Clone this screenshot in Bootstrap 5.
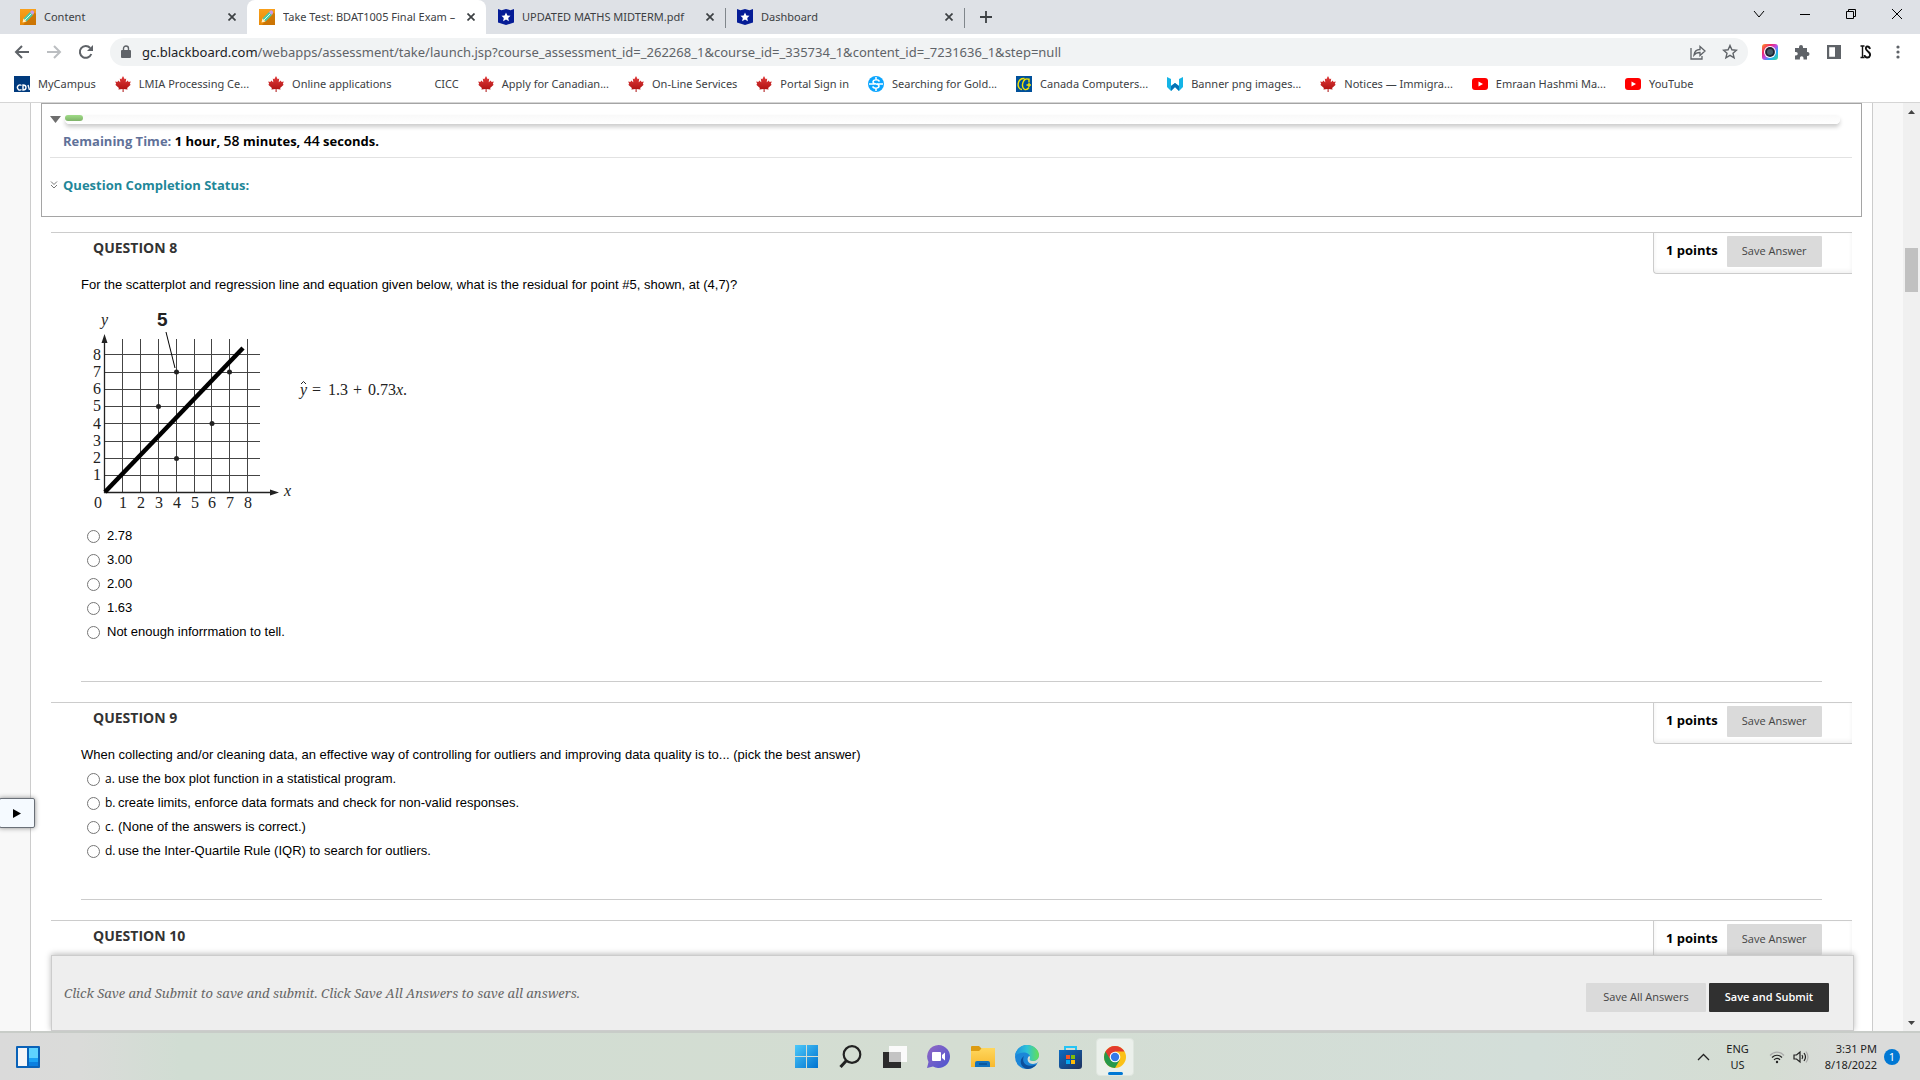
<!DOCTYPE html>
<html lang="en">
<head>
<meta charset="utf-8">
<title>Take Test: BDAT1005 Final Exam</title>
<meta name="viewport" content="width=device-width, initial-scale=1">
<link href="https://cdn.jsdelivr.net/npm/bootstrap@5.3.0/dist/css/bootstrap.min.css" rel="stylesheet">
<style>
body{font-family:"Open Sans","Noto Sans",sans-serif;font-size:12px;line-height:16px;color:#000;height:100vh;overflow:hidden}
button{font-family:inherit}
svg{display:block;flex:none}
a{color:inherit;text-decoration:none}
.plain{border:0;background:none;padding:0;color:inherit}
/* browser chrome */
.tabstrip,.url,.marks,.tray{font-family:"Noto Sans","Open Sans",sans-serif}
.tabstrip{height:34px;background:#dee1e6;color:#3c4043}
.btab{width:239px;padding:0 11px 0 20px}
.btab.lead-tab{width:247px}
.btab .label{flex:1;overflow:hidden;white-space:nowrap;margin:0 5px 0 8px;font-size:11px}
.btab.on{background:#fff;border-radius:8px 8px 0 0;padding-left:12px}
.btab.follow{padding-left:12px}
.sep{width:1px;height:20px;margin-right:-1px;background:#80868b}
.wincontrols{gap:28px;padding:0 14px 6px 0}
.toolbar{height:36px;padding:0 14px;color:#5f6368}
.omni{height:28px;border-radius:14px;background:#f1f3f4;padding:0 10px 0 11px;margin-right:14px}
.url{font-size:13px;white-space:nowrap;margin-left:11px}
.url b{font-weight:400;color:#202124}
.marks{height:32px;padding:0 14px 4px;color:#3c4043}
.marks a{display:flex;align-items:center;gap:8px;white-space:nowrap;margin-right:19px;font-size:11px}
/* page */
.viewport{flex:1 1 0;min-height:0;border-top:1px solid #d5d5d5;background:#f8f8f8;overflow:hidden}
.sheet{margin:0 31px 0 30px;border:solid #ccc;border-width:0 1px;background:#fff;padding:0 10px}
.timer{border:1px solid #a5a5a5;height:114px;padding:9px 9px 0 8px}
.track{height:9px;border-radius:5px;margin:2px 12px 0 4px;box-shadow:0 3px 4px #ccc;background:linear-gradient(#f9f9f9,#fff)}
.track i{display:block;width:18px;height:6px;border-radius:3px;background:linear-gradient(#a0dc87,#7fb269)}
.tri{margin-top:3px}
.remain{font-weight:700;font-size:13px;line-height:18px;padding:7px 0 7px 13px;border-bottom:1px solid #e2e2e2;margin-top:1px;color:#000}
.remain span{color:#5f7199}
.remain b{font-size:14px;font-weight:600}
.qstatus{color:#1f8799;font-size:13px;font-weight:700;line-height:18px;margin-top:18px;gap:5px}
.question{margin:0 10px;border-top:1px solid #ccc;height:218px}
.question.first{margin-top:15px;height:470px}
.question h2{font-size:14px;font-weight:700;line-height:18px;color:#333;margin:6px 0 0 42px}
.points{width:199px;height:41px;border:solid #ccc;border-width:0 0 1px 1px;border-radius:0 0 0 4px;padding:3px 0 0 12px;gap:9px;box-shadow:inset 0 -2px 4px #f0f0f0}
.points strong{font-size:13px;font-weight:700;line-height:28px}
.btn-bb{border:0;border-radius:1px;background:#dadada;color:#444;font-size:11px;line-height:16px;padding:0 0 2px;height:31px;width:95px}
.qbody{font-family:"Liberation Sans",Arial,sans-serif;font-size:13px;line-height:24px;margin:-1px 30px 0;border-bottom:1px solid #ccc}
.qbody.tall{height:409px}
.qbody.short{height:157px}
.qbody p{margin:0}
.qbody input{width:13px;height:13px;margin:0 7px 0 6px;flex:none}
.lettered input{margin-right:5px}
.ltr{width:13px;font-family:"Open Sans",sans-serif;font-size:12px;white-space:nowrap}
.chart text{font-family:"Liberation Serif",serif;font-size:16px;fill:#222}
.submitbar{left:51px;right:66px;bottom:0;height:76px;background:#eee;border:1px solid #ccc;box-shadow:0 -1px 6px #bbb;padding:0 24px 0 12px}
.submitbar em{font-family:"Noto Serif","Liberation Serif",Georgia,serif;font-size:13px;color:#666}
.submitbar .actions{gap:3px}
.submitbar .btn{height:29px;width:120px;padding:0;border:0;border-radius:1px;font-size:11px;line-height:16px}
.btn-submit{--bs-btn-bg:#303030}
.handle{left:-1px;top:695px;width:36px;height:30px;border:1px solid #6a7078;border-radius:2px;background:#f5faff;box-shadow:0 0 5px #888}
.scroller{right:0;top:0;bottom:0;width:17px;background:#f0f0f0;padding:7px 0 6px}
.scroller i{width:13px;height:44px;background:#c1c1c1;margin-top:134px}
/* taskbar */
.taskbar{height:49px;border-top:2px solid #c8ccc8;background:linear-gradient(90deg,#dadada 0,#dadbd9 80px,#d1ddd3 180px,#d4ddd2 50%,#d3ded9 80%,#d5ddd3 92%,#dadbda 97%);color:#222}
.apps{left:787px;top:0;height:47px}
.apps button{width:44px;height:40px}
.apps .open{background:#ebf0eb;border:1px solid #dfe6df;border-radius:4px;width:38px;height:38px;margin-left:1px;position:relative}
.apps .open::after{content:"";position:absolute;bottom:0;left:11px;width:15px;height:3px;border-radius:2px;background:#0078d4}
.tray{font-size:11px;line-height:16px;padding-right:20px}
.badge-n{width:16px;height:16px;border-radius:8px;background:#0078d4;color:#fff;font-size:11px;line-height:16px;text-align:center;margin-left:7px}
</style>
<script src="https://cdn.jsdelivr.net/npm/bootstrap@5.3.0/dist/js/bootstrap.bundle.min.js"></script>
</head>
<body class="d-flex flex-column">
<svg width="0" height="0" class="position-absolute" aria-hidden="true">
<defs>
<linearGradient id="gOr" x1="0" y1="0" x2="0" y2="1"><stop offset="0" stop-color="#f9a01b"/><stop offset="1" stop-color="#e88a08"/></linearGradient>
<linearGradient id="gRed" x1="0" y1="0" x2="0" y2="1"><stop offset="0" stop-color="#e23b3b"/><stop offset="1" stop-color="#a80d0d"/></linearGradient>
<linearGradient id="gWin" gradientUnits="userSpaceOnUse" x1="0" y1="0" x2="23" y2="23"><stop offset="0" stop-color="#4cc9fa"/><stop offset="1" stop-color="#0072d0"/></linearGradient>
<linearGradient id="gTeam" x1="0" y1="0" x2="1" y2="1"><stop offset="0" stop-color="#9468c4"/><stop offset="1" stop-color="#4a54d0"/></linearGradient>
<linearGradient id="gFold" x1="0" y1="0" x2="0" y2="1"><stop offset="0" stop-color="#ffd75e"/><stop offset="1" stop-color="#f8b92e"/></linearGradient>
<linearGradient id="gEdge" x1="0" y1="0" x2="1" y2="0"><stop offset="0" stop-color="#1d8fe0"/><stop offset=".5" stop-color="#2dc3d8"/><stop offset="1" stop-color="#66e052"/></linearGradient>
<linearGradient id="gStore" x1="0" y1="0" x2="1" y2="1"><stop offset="0" stop-color="#0a6cc4"/><stop offset="1" stop-color="#20305c"/></linearGradient>
<linearGradient id="gCam" x1="0" y1="0" x2="1" y2="1"><stop offset="0" stop-color="#ff9a1f"/><stop offset=".3" stop-color="#f0266f"/><stop offset=".5" stop-color="#c04ae0"/><stop offset=".7" stop-color="#25a8ff"/><stop offset="1" stop-color="#3fe08a"/></linearGradient>
<symbol id="pencil" viewBox="0 0 16 16"><rect width="16" height="16" fill="url(#gOr)"/><path d="M14.500 3.500L16 5v11H3z" fill="#b86500" opacity=".6"/><path d="M3.500 9.500l6.500-6.500 3 3-6.500 6.500z" fill="#4cc9a8"/><path d="M5 11l6.500-6.500" stroke="#d9fff0" stroke-width="1"/><path d="M10 3l1.500-1.500q1-.5 2 .5t.5 2L13 6z" fill="#c79bea"/><path d="M2.500 13.500l1-4 3 3z" fill="#fff0c8"/></symbol>
<symbol id="shield" viewBox="0 0 16 16"><path d="M0 0l3.500 1.200L8 0l4.500 1.200L16 0v13.500L8 16 0 13.500z" fill="#051c96"/><path d="M8 3.500l1.400 3 3.100.3-2.300 2.200.7 3.200L8 10.600l-2.900 1.600.7-3.200-2.300-2.200 3.100-.3z" fill="#fff"/></symbol>
<symbol id="maple" viewBox="0 0 16 16"><path d="M8 0l1.700 3.200 1.500-.8-.5 3.900 2.200-1.700.6 1.300 2.300-.3-1 2.500.9.700-3.600 3.200.5 1.500-4-.5V16h-1v-3l-4.200.5.500-1.500L.3 8.800l.9-.7-1-2.500 2.300.3.600-1.300 2.200 1.700-.5-3.900 1.500.8z" fill="url(#gRed)"/></symbol>
<symbol id="yt" viewBox="0 0 16 16"><rect y="2" width="16" height="12" rx="3" fill="#f00"/><path d="M6.500 5.500L11 8l-4.500 2.500z" fill="#fff"/></symbol>
<symbol id="cross" viewBox="0 0 8 8"><path d="M.5.5l7 7M7.500.5l-7 7" stroke="#3c4043" stroke-width="1.700"/></symbol>
</defs></svg>

<header class="flex-shrink-0">
<div class="tabstrip d-flex">
 <div class="btab lead-tab d-flex align-items-center"><svg width="16" height="16"><use href="#pencil"/></svg><span class="label">Content</span><button class="plain" aria-label="Close tab"><svg width="8" height="8"><use href="#cross"/></svg></button></div>
 <div class="btab on d-flex align-items-center"><svg width="16" height="16"><use href="#pencil"/></svg><span class="label">Take Test: BDAT1005 Final Exam –</span><button class="plain" aria-label="Close tab"><svg width="8" height="8"><use href="#cross"/></svg></button></div>
 <div class="btab follow d-flex align-items-center"><svg width="16" height="16"><use href="#shield"/></svg><span class="label">UPDATED MATHS MIDTERM.pdf</span><button class="plain" aria-label="Close tab"><svg width="8" height="8"><use href="#cross"/></svg></button></div>
 <span class="sep mt-2"></span>
 <div class="btab follow d-flex align-items-center"><svg width="16" height="16"><use href="#shield"/></svg><span class="label">Dashboard</span><button class="plain" aria-label="Close tab"><svg width="8" height="8"><use href="#cross"/></svg></button></div>
 <span class="sep mt-2"></span>
 <button class="plain ms-3" aria-label="New tab"><svg width="12" height="12" viewBox="0 0 12 12"><path d="M6 0v12M0 6h12" stroke="#3c4043" stroke-width="1.800"/></svg></button>
 <div class="wincontrols d-flex align-items-center ms-auto text-black">
  <button class="plain" aria-label="Search tabs"><svg width="18" height="12" viewBox="0 0 18 12" fill="none" stroke="currentColor"><path d="M4 3l5 6 5-6"/></svg></button>
  <button class="plain" aria-label="Minimize"><svg width="18" height="12" viewBox="0 0 18 12"><path d="M4 6.500h10" stroke="currentColor"/></svg></button>
  <button class="plain" aria-label="Restore"><svg width="18" height="12" viewBox="0 0 18 12" fill="none" stroke="currentColor"><path d="M4.500 3.500h7v7h-7zM6.500 3.500v-2h7v7h-2"/></svg></button>
  <button class="plain" aria-label="Close"><svg width="18" height="12" viewBox="0 0 18 12" fill="none" stroke="currentColor"><path d="M4 1l10 10M14 1L4 11"/></svg></button>
 </div>
</div>
<div class="toolbar d-flex align-items-center">
 <button class="plain" aria-label="Back"><svg width="16" height="16" viewBox="0 0 16 16" fill="none" stroke="#5f6368" stroke-width="2"><path d="M15 8H2M8 2L2 8l6 6"/></svg></button>
 <button class="plain ms-3" aria-label="Forward"><svg width="16" height="16" viewBox="0 0 16 16" fill="none" stroke="#bbbec1" stroke-width="2"><path d="M1 8h13M8 2l6 6-6 6"/></svg></button>
 <button class="plain ms-3" aria-label="Reload"><svg width="16" height="16" viewBox="0 0 16 16"><path d="M13.300 10A5.900 5.900 0 1 1 12.200 4" fill="none" stroke="#5f6368" stroke-width="2"/><path d="M15 1v6H9z" fill="#5f6368"/></svg></button>
 <div class="omni d-flex align-items-center flex-grow-1 ms-3">
  <svg width="10" height="14" viewBox="0 0 10 14"><rect x="0" y="5" width="10" height="8" rx="1" fill="#5f6368"/><path d="M2.500 6V3.500a2.500 2.500 0 0 1 5 0V6" fill="none" stroke="#5f6368" stroke-width="1.400"/></svg>
  <span class="url flex-grow-1"><b>gc.blackboard.com</b>/webapps/assessment/take/launch.jsp?course_assessment_id=_262268_1&amp;course_id=_335734_1&amp;content_id=_7231636_1&amp;step=null</span>
  <button class="plain" aria-label="Share"><svg width="16" height="16" viewBox="0 0 16 16" fill="none" stroke="#5f6368" stroke-width="1.300"><path d="M1 4v11h11v-3M4 11c.5-4 3-5.500 6-5.500V2.500l5 4.500-5 4.500v-3C7.500 8.500 5.500 9 4 11z"/></svg></button>
  <button class="plain ms-3" aria-label="Bookmark"><svg width="16" height="16" viewBox="0 0 16 16" fill="none" stroke="#5f6368" stroke-width="1.400"><path d="M8 1.500l1.900 4.300 4.600.4-3.500 3.100 1.100 4.600L8 11.400l-4.100 2.500L5 9.300 1.500 6.200l4.600-.4z"/></svg></button>
 </div>
 <div class="d-flex align-items-center gap-3">
  <svg width="16" height="16" viewBox="0 0 16 16"><rect width="16" height="16" rx="3" fill="url(#gCam)"/><circle cx="8" cy="8" r="6" fill="#fff"/><circle cx="8" cy="8" r="4.900" fill="#223"/><circle cx="8" cy="8" r="3" fill="#465a66"/></svg>
  <svg width="16" height="16" viewBox="0 0 16 16"><path d="M1 4h4V3a2 2 0 0 1 4 0v1h4v4h.5a2 2 0 0 1 0 4H13v3.500H9.500V14a1.800 1.800 0 0 0-3.600 0v1.500H1V11.500h1a1.700 1.700 0 0 0 0-3.500H1z" fill="#5f6368"/></svg>
  <svg width="16" height="16" viewBox="0 0 16 16"><path d="M1 1h14v14H1zM3.200 3.200v9.600H9V3.200z" fill="#5f6368" fill-rule="evenodd"/></svg>
  <svg width="16" height="16" viewBox="0 0 16 16" fill="none" stroke="#111"><path d="M2.500 2h4M4.500 2v11.500M2.500 13.500h4" stroke-width="1.400"/><path d="M12 5C11 1.500 7 2 8 5s5 3 4 6.500-5.500 2-5.500-.5" stroke-width="1.900"/></svg>
  <svg width="16" height="16" viewBox="0 0 16 16" fill="#5f6368"><circle cx="8" cy="3" r="1.600"/><circle cx="8" cy="8" r="1.600"/><circle cx="8" cy="13" r="1.600"/></svg>
 </div>
</div>
<nav class="marks d-flex" aria-label="Bookmarks">
 <a href="#"><svg width="16" height="16" viewBox="0 0 16 16"><rect width="16" height="16" fill="#003a7d"/><path d="M7.500 9.500a2.500 2.500 0 1 0 0 4M9 9v5c4 0 4-5 0-5zM14 9l1.500 5" fill="none" stroke="#fff" stroke-width="1.400"/></svg>MyCampus</a>
 <a href="#"><svg width="16" height="16"><use href="#maple"/></svg>LMIA Processing Ce...</a>
 <a href="#"><svg width="16" height="16"><use href="#maple"/></svg>Online applications</a>
 <a href="#"><svg width="16" height="16"></svg>CICC</a>
 <a href="#"><svg width="16" height="16"><use href="#maple"/></svg>Apply for Canadian...</a>
 <a href="#"><svg width="16" height="16"><use href="#maple"/></svg>On-Line Services</a>
 <a href="#"><svg width="16" height="16"><use href="#maple"/></svg>Portal Sign in</a>
 <a href="#"><svg width="16" height="16" viewBox="0 0 16 16"><circle cx="8" cy="8" r="8" fill="#0aa5ff"/><path d="M11.500 5.500C10 3 5 3.500 5 6s6 1.500 6 4-5 3-6.500.5M8 1v3M8 12v3M1 8h6M9 8h6" fill="none" stroke="#fff" stroke-width="1.500"/></svg>Searching for Gold...</a>
 <a href="#"><svg width="16" height="16" viewBox="0 0 16 16"><rect width="16" height="16" fill="#00509a"/><path d="M8.500 2.500C1 2 0 13 6 13.500M13 3.500C7 0 4 12 9 13.500M13 2.500v4M9 13.500c2 .5 3-.5 4-2M10.500 9h4.500M13 7v4" fill="none" stroke="#f5e400" stroke-width="1.400"/></svg>Canada Computers...</a>
 <a href="#"><svg width="16" height="16" viewBox="0 0 16 16"><path d="M0 1l4 2v7l4-3 4 3V3l4-2v10l-4 4-4-4-4 4-4-4z" fill="#14b4e6"/><path d="M4 10l4-3 4 3v5l-4-4-4 4z" fill="#0872b5"/></svg>Banner png images...</a>
 <a href="#"><svg width="16" height="16"><use href="#maple"/></svg>Notices — Immigra...</a>
 <a href="#"><svg width="16" height="16"><use href="#yt"/></svg>Emraan Hashmi Ma...</a>
 <a href="#"><svg width="16" height="16"><use href="#yt"/></svg>YouTube</a>
</nav>
</header>

<main class="viewport position-relative">
<div class="scrollpane pe-3 h-100">
<div class="sheet h-100">
 <section class="timer">
  <div class="d-flex"><svg class="tri" width="11" height="7" viewBox="0 0 11 7"><path d="M0 0h11L5.500 7z" fill="#6e6e6e"/></svg><div class="track flex-grow-1"><i></i></div></div>
  <div class="remain"><span>Remaining Time:</span> 1 hour, <b>58</b> minutes, <b>44</b> seconds.</div>
  <a href="#" class="qstatus d-flex align-items-center"><svg width="8" height="8" viewBox="0 0 8 8" fill="none" stroke="#777"><path d="M1 .5l3 3 3-3M1 4l3 3 3-3"/></svg>Question Completion Status:</a>
 </section>
 <section class="question first">
  <div class="d-flex justify-content-between"><h2>QUESTION 8</h2><div class="points d-flex"><strong>1 points</strong><button class="btn btn-bb">Save Answer</button></div></div>
  <div class="qbody tall">
   <p>For the scatterplot and regression line and equation given below, what is the residual for point #5, shown, at (4,7)?</p>
   <svg class="chart" width="345" height="227" viewBox="81 297 345 227" role="img" aria-label="Scatterplot with regression line">
    <g stroke="#444" stroke-width="1"><path d="M122.500 339v154M140.500 339v154M158.500 339v154M176.500 339v154M194.500 339v154M211.500 339v154M229.500 339v154M247.500 339v154M105 354.500h155M105 372.500h155M105 389.500h155M105 406.500h155M105 423.500h155M105 441.500h155M105 458.500h155M105 475.500h155"/><path d="M104.500 342v151M104 492.500h168" stroke-width="1.300" stroke="#222"/></g>
    <path d="M104.500 334l3 9h-6zM279 492.500l-9 3v-6z" fill="#222"/>
    <path d="M105 492L243 348" stroke="#000" stroke-width="4.500"/><path d="M166 332l9 36" stroke="#000"/>
    <g fill="#222"><circle cx="176.500" cy="372" r="2.500"/><circle cx="229.500" cy="372" r="2.500"/><circle cx="158.500" cy="406.500" r="2.500"/><circle cx="212" cy="423.500" r="2.500"/><circle cx="176.500" cy="458.500" r="2.500"/></g>
    <text x="101" y="325" font-style="italic">y</text><text x="284" y="496" font-style="italic">x</text>
    <text x="157" y="326" style="font:bold 19px 'Liberation Sans',Arial,sans-serif">5</text>
    <g text-anchor="middle"><text x="97" y="360">8</text><text x="97" y="377">7</text><text x="97" y="394">6</text><text x="97" y="411">5</text><text x="97" y="429">4</text><text x="97" y="446">3</text><text x="97" y="463">2</text><text x="97" y="480">1</text>
    <text x="98" y="508">0</text><text x="123" y="508">1</text><text x="141" y="508">2</text><text x="159" y="508">3</text><text x="177" y="508">4</text><text x="195" y="508">5</text><text x="212" y="508">6</text><text x="230" y="508">7</text><text x="248" y="508">8</text></g>
    <text x="300" y="395"><tspan font-style="italic">y</tspan><tspan x="312">=</tspan><tspan x="328">1.3</tspan><tspan x="353">+</tspan><tspan x="368">0.73<tspan font-style="italic">x</tspan>.</tspan></text><path d="M301 384l2.500-2.500 2.500 2.500" fill="none" stroke="#222"/>
   </svg>
   <label class="d-flex align-items-center"><input type="radio" name="q8">2.78</label>
   <label class="d-flex align-items-center"><input type="radio" name="q8">3.00</label>
   <label class="d-flex align-items-center"><input type="radio" name="q8">2.00</label>
   <label class="d-flex align-items-center"><input type="radio" name="q8">1.63</label>
   <label class="d-flex align-items-center"><input type="radio" name="q8">Not enough inforrmation to tell.</label>
  </div>
 </section>
 <section class="question">
  <div class="d-flex justify-content-between"><h2>QUESTION 9</h2><div class="points d-flex"><strong>1 points</strong><button class="btn btn-bb">Save Answer</button></div></div>
  <div class="qbody short lettered">
   <p>When collecting and/or cleaning data, an effective way of controlling for outliers and improving data quality is to... (pick the best answer)</p>
   <label class="d-flex align-items-center"><input type="radio" name="q9"><span class="ltr">a.</span>use the box plot function in a statistical program.</label>
   <label class="d-flex align-items-center"><input type="radio" name="q9"><span class="ltr">b.</span>create limits, enforce data formats and check for non-valid responses.</label>
   <label class="d-flex align-items-center"><input type="radio" name="q9"><span class="ltr">c.</span>(None of the answers is correct.)</label>
   <label class="d-flex align-items-center"><input type="radio" name="q9"><span class="ltr">d.</span>use the Inter-Quartile Rule (IQR) to search for outliers.</label>
  </div>
 </section>
 <section class="question">
  <div class="d-flex justify-content-between"><h2>QUESTION 10</h2><div class="points d-flex"><strong>1 points</strong><button class="btn btn-bb">Save Answer</button></div></div>
 </section>
</div>
</div>
<div class="submitbar position-absolute d-flex align-items-center justify-content-between">
 <em>Click Save and Submit to save and submit. Click Save All Answers to save all answers.</em>
 <div class="actions d-flex pt-2"><button class="btn btn-bb">Save All Answers</button><button class="btn btn-dark btn-submit fw-semibold">Save and Submit</button></div>
</div>
<button class="handle position-absolute p-0 d-flex align-items-center justify-content-center" aria-label="Show course menu"><svg width="8" height="9" viewBox="0 0 8 9"><path d="M0 0l8 4.500L0 9z"/></svg></button>
<div class="scroller position-absolute d-flex flex-column align-items-center"><svg width="7" height="4" viewBox="0 0 7 4"><path d="M0 4h7L3.500 0z" fill="#444"/></svg><i></i><svg class="mt-auto" width="7" height="4" viewBox="0 0 7 4"><path d="M0 0h7L3.500 4z" fill="#444"/></svg></div>
</main>

<footer class="taskbar flex-shrink-0 d-flex align-items-center position-relative">
 <button class="plain ms-3" aria-label="Widgets"><svg width="24" height="22" viewBox="0 0 24 22"><rect width="24" height="22" rx="1" fill="#0a62b8"/><rect x="2" y="2" width="9" height="18" fill="#f5f5f7"/><path d="M13 2h9v10h-9z" fill="#5fd4ff"/><path d="M13 12h9v4h-9z" fill="#1aa3f5"/><path d="M13 16h9v4h-9z" fill="#0a7fe0"/></svg></button>
 <div class="apps position-absolute d-flex align-items-center">
  <button class="plain d-flex align-items-center ps-2" aria-label="Start"><svg width="23" height="23" viewBox="0 0 23 23"><path d="M0 0h11v11H0zM12 0h11v11H12zM0 12h11v11H0zM12 12h11v11H12z" fill="url(#gWin)"/></svg></button>
  <button class="plain d-flex align-items-center ps-2" aria-label="Search"><svg width="23" height="23" viewBox="0 0 23 23" fill="none" stroke="#222" stroke-width="2.200"><circle cx="13" cy="9.500" r="8.300"/><path d="M7.500 15.500L1.500 22" stroke-width="3"/></svg></button>
  <button class="plain d-flex align-items-center ps-2" aria-label="Task view"><svg width="24" height="22" viewBox="0 0 24 22"><path d="M0 6h18v16H0z" fill="#2b2b2b"/><path d="M6 0h18v16H6z" fill="#fafafa"/><path d="M6 6h12v10H6z" fill="#c4c4c4"/></svg></button>
  <button class="plain d-flex align-items-center ps-2" aria-label="Chat"><svg width="23" height="23" viewBox="0 0 23 23"><path d="M11.500 0a11.500 11.500 0 1 1-5.500 21.600L0 23l1.500-6A11.500 11.500 0 0 1 11.500 0z" fill="url(#gTeam)"/><rect x="5" y="7" width="9" height="9" rx="1" fill="#fff"/><path d="M15 10l3-2.500v8L15 13z" fill="#fff"/></svg></button>
  <button class="plain d-flex align-items-center ps-2" aria-label="File Explorer"><svg width="24" height="22" viewBox="0 0 24 22"><path d="M0 1q0-1 1-1h7l3 3v4H0z" fill="#dd9c12"/><path d="M0 5h8l3-3h13v19H0z" fill="url(#gFold)"/><path d="M4 21v-4q0-2 2-2h11q2 0 2 2v4z" fill="#1272bd"/><path d="M8 18h8" stroke="#0a4f92" stroke-width="1.500"/></svg></button>
  <button class="plain d-flex align-items-center ps-2" aria-label="Edge"><svg width="24" height="24" viewBox="0 0 24 24"><circle cx="12" cy="12" r="12" fill="#1b86d8"/><path d="M0 11C1 4 6 0 12 0c7 0 12 5 12 10 0 4-3 6-6 6-3 0-4-1-3-3 1-6-9-8-15-2z" fill="url(#gEdge)"/><path d="M9 11c-3 6 2 12 11 9l2-1c-3 4-7 5-10 5-6-1-9-9-3-13z" fill="#0c4f9c"/><path d="M14 11c-3 3-1 8 4 8 2 0 3-1 4-1l2-2V10c0 4-3 6-6 6-3 0-4-1-3-3 .3-1 0-2-1-2z" fill="#d5ded4"/></svg></button>
  <button class="plain d-flex align-items-center ps-2" aria-label="Store"><svg width="23" height="24" viewBox="0 0 23 24"><path d="M6 6V2h11v4" fill="none" stroke="#25c4f5" stroke-width="2"/><path d="M0 5h23v16q0 3-3 3H3q-3 0-3-3z" fill="url(#gStore)"/><path d="M7 10h4v4H7z" fill="#f35325"/><path d="M12 10h4v4h-4z" fill="#81bc06"/><path d="M7 15h4v4H7z" fill="#05a6f0"/><path d="M12 15h4v4h-4z" fill="#ffba08"/></svg></button>
  <button class="plain open d-flex align-items-center justify-content-center" aria-label="Chrome"><svg width="22" height="22" viewBox="0 0 22 22"><circle cx="11" cy="11" r="11" fill="#fbc116"/><path d="M11 11L1.500 5.500A11 11 0 0 0 11 22l5-8.500z" fill="#26984a"/><path d="M1.500 5.500A11 11 0 0 1 20.500 5.500H11L6 13z" fill="#e33b2e"/><circle cx="11" cy="11" r="5.300" fill="#fff"/><circle cx="11" cy="11" r="4.200" fill="#3579e8"/></svg></button>
 </div>
 <div class="tray d-flex align-items-center ms-auto">
  <svg width="13" height="8" viewBox="0 0 13 8" fill="none" stroke="#222" stroke-width="1.300"><path d="M1 7l5.500-5.500L12 7"/></svg>
  <div class="text-center ms-3">ENG<br>US</div>
  <div class="d-flex gap-2 ms-3 ps-1"><svg width="16" height="14" viewBox="0 0 16 14" fill="none" stroke="#222" stroke-width="1.200"><path d="M1 5.500C5 1 11 1 15 5.500" stroke="#aaa"/><path d="M3 7.500c3-3 7-3 10 0M5 9.800c2-2 4-2 6 0"/><circle cx="8" cy="12" r="1.200" fill="#222" stroke="none"/></svg>
  <svg width="16" height="14" viewBox="0 0 16 14" fill="none" stroke="#222" stroke-width="1.200"><path d="M1 5h2.500L7 2v10L3.500 9H1zM9 5q1.500 2 0 4M11 3q3 4 0 8"/><path d="M13 1.500q4 5.500 0 11" stroke="#aaa"/></svg></div>
  <div class="text-end ms-3">3:31 PM<br>8/18/2022</div>
  <span class="badge-n">1</span>
 </div>
</footer>
</body>
</html>
